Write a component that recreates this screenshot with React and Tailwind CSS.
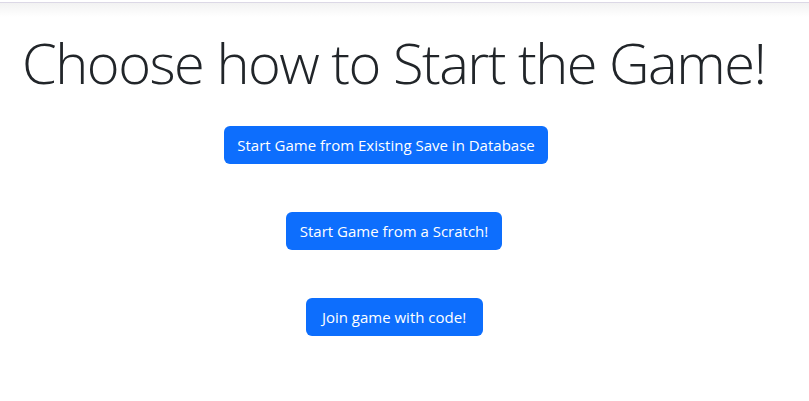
export default function App() {
  const btn =
    "bg-[#0d6efd] text-white text-[15px] h-[38px] rounded-[6px] flex items-center justify-center";

  return (
    <div className="min-h-screen bg-white" style={{ fontFamily: '"Open Sans", sans-serif' }}>
      {/* top shadow */}
      <div className="h-[2px] bg-white" />
      <div className="h-px bg-[#dcd8e6]" />
      <div className="h-[14px] bg-gradient-to-b from-[#f2f2f2] to-white" />

      <h1 className="mt-[12px] pl-[22px] text-[56px] leading-[1.2] font-light tracking-[-1.5px] text-[#212529] whitespace-nowrap">
        Choose how to Start the Game!
      </h1>

      <div className="mt-[30px] w-[788px] flex flex-col items-center gap-12">
        <button className={`${btn} w-[324px] mr-4`}>
          Start Game from Existing Save in Database
        </button>
        <button className={`${btn} w-[216px]`}>Start Game from a Scratch!</button>
        <button className={`${btn} w-[177px]`}>Join game with code!</button>
      </div>
    </div>
  );
}
